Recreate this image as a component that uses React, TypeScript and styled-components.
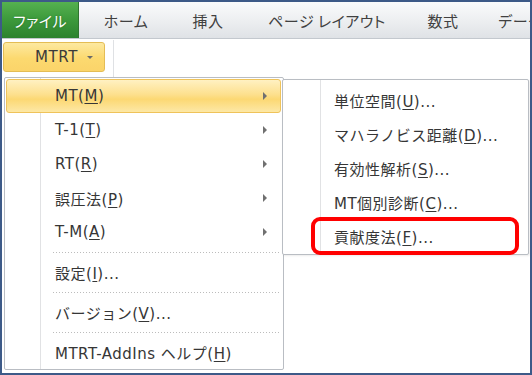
import React from "react";
import styled, { createGlobalStyle, css } from "styled-components";

const GlobalStyle = createGlobalStyle`
  html, body { margin: 0; padding: 0; background: #fff; }
  body {
    font-family: "DejaVu Sans", "Noto Sans CJK JP", sans-serif;
    -webkit-font-smoothing: antialiased;
  }
`;

const Frame = styled.div`
  width: 532px;
  height: 375px;
  box-sizing: border-box;
  border: 2px solid #3d5a88;
  background: #fff;
  overflow: hidden;
  display: flex;
  flex-direction: column;
`;

const TabBar = styled.div`
  flex: none;
  height: 37px;
  box-sizing: border-box;
  display: flex;
  align-items: stretch;
  background: linear-gradient(#fafbfc, #eceef0 55%, #dfe2e6);
  border-bottom: 1px solid #c3c8ce;
  font-family: "Noto Sans CJK JP", sans-serif;
  font-feature-settings: "palt";
  font-size: 15px;
  white-space: nowrap;
`;

const FileTab = styled.div`
  flex: none;
  width: 76px;
  display: flex;
  align-items: center;
  justify-content: center;
  color: #fff;
  letter-spacing: 0.5px;
  background: linear-gradient(#55b150, #3c993b 50%, #2c822e);
  border-right: 1px solid #2f7530;
  text-shadow: 0 0 2px rgba(0, 60, 0, 0.4);
`;

const Tab = styled.div<{ $w: number }>`
  flex: none;
  width: ${(p) => p.$w}px;
  display: flex;
  align-items: center;
  justify-content: center;
  color: #404040;
  letter-spacing: 0.5px;
`;

const Ribbon = styled.div`
  flex: none;
  height: 38px;
  box-sizing: border-box;
  display: flex;
  align-items: flex-start;
  padding: 3px 0 0 1px;
`;

const RibbonButton = styled.div`
  width: 102px;
  height: 30px;
  box-sizing: border-box;
  border: 1px solid #e4bd55;
  border-radius: 3px;
  background: linear-gradient(#fde9a1, #fcd96f 55%, #fbd46a);
  display: flex;
  align-items: center;
  padding-left: 31px;
  gap: 9px;
  font-size: 15px;
  letter-spacing: 0.6px;
  color: #3a3a3a;
`;

const SmallCaret = styled.span`
  width: 0;
  height: 0;
  border-left: 3px solid transparent;
  border-right: 3px solid transparent;
  border-top: 3px solid #6a6a6a;
  margin-top: 1px;
`;

const GroupDivider = styled.div`
  width: 1px;
  align-self: stretch;
  margin: -2px 0 0 8px;
  background: #dfe1e4;
`;

const MenuArea = styled.div`
  display: flex;
  align-items: flex-start;
  padding-left: 2px;
`;

const menuBase = css`
  flex: none;
  box-sizing: border-box;
  border: 1px solid #b9bdc3;
  border-radius: 2px;
  font-size: 15px;
  letter-spacing: 0.5px;
  color: #363636;
  white-space: nowrap;
`;

const MainMenu = styled.div`
  ${menuBase};
  width: 280px;
  padding: 1px 2px 0 1px;
  background: linear-gradient(
      to right,
      transparent 35px,
      #e1e2e4 35px,
      #e1e2e4 36px,
      #fff 36px,
      #fff 37px,
      transparent 37px
    ),
    #fff;
`;

const SubMenu = styled.div`
  ${menuBase};
  width: 247px;
  margin: 2px 0 0 -2px;
  padding: 3px 1px 1px 1px;
  background: linear-gradient(
      to right,
      transparent 37px,
      #e1e2e4 37px,
      #e1e2e4 38px,
      #fff 38px,
      #fff 39px,
      transparent 39px
    ),
    #fff;
  box-shadow: 1px 1px 2px rgba(0, 0, 0, 0.08);
`;

const Item = styled.div<{ $active?: boolean; $pad: number }>`
  position: relative;
  height: 34px;
  box-sizing: border-box;
  display: flex;
  align-items: center;
  padding-left: ${(p) => p.$pad}px;
  border: 1px solid transparent;
  border-radius: 3px;
  ${(p) =>
    p.$active &&
    css`
      border-color: #efc35a;
      background: linear-gradient(#fff1c2, #fde08e 45%, #fcd873 60%, #fde8a6);
    `}
`;

const Key = styled.span`
  text-decoration: underline;
  text-underline-offset: 2px;
  text-decoration-thickness: 1px;
`;

const Arrow = styled.span`
  margin-left: auto;
  margin-right: 13px;
  width: 0;
  height: 0;
  border-top: 4px solid transparent;
  border-bottom: 4px solid transparent;
  border-left: 4px solid #707070;
`;

const Separator = styled.div`
  height: 6px;
  display: flex;
  align-items: center;
  padding-left: 47px;
  &::after {
    content: "";
    flex: 1;
    height: 1px;
    background: repeating-linear-gradient(
      to right,
      #bcbcbc 0 1px,
      transparent 1px 3px
    );
  }
`;

const RedMark = styled.div`
  position: absolute;
  left: 26px;
  right: 7px;
  top: -3px;
  bottom: -3px;
  border: 4px solid #ff0000;
  border-radius: 9px;
  pointer-events: none;
`;

type Entry = { label: string; key: string; tail?: string; sub?: boolean };

const mainTop: Entry[] = [
  { label: "MT", key: "M", sub: true },
  { label: "T-1", key: "T", sub: true },
  { label: "RT", key: "R", sub: true },
  { label: "誤圧法", key: "P", sub: true },
  { label: "T-M", key: "A", sub: true },
];

const mainBottom: Entry[] = [
  { label: "設定", key: "I", tail: "..." },
  { label: "バージョン", key: "V", tail: "..." },
  { label: "MTRT-AddIns ヘルプ", key: "H" },
];

const subItems: Entry[] = [
  { label: "単位空間", key: "U", tail: "..." },
  { label: "マハラノビス距離", key: "D", tail: "..." },
  { label: "有効性解析", key: "S", tail: "..." },
  { label: "MT個別診断", key: "C", tail: "..." },
  { label: "貢献度法", key: "F", tail: "..." },
];

const Label = ({ e }: { e: Entry }) => (
  <span>
    {e.label}(<Key>{e.key}</Key>){e.tail ?? ""}
  </span>
);

export default function App() {
  return (
    <>
      <GlobalStyle />
      <Frame>
        <TabBar>
          <FileTab>ファイル</FileTab>
          <Tab $w={94}>ホーム</Tab>
          <Tab $w={70}>挿入</Tab>
          <Tab $w={168}>ページ レイアウト</Tab>
          <Tab $w={64}>数式</Tab>
          <Tab $w={90}>データ</Tab>
        </TabBar>
        <Ribbon>
          <RibbonButton>
            MTRT
            <SmallCaret />
          </RibbonButton>
          <GroupDivider />
        </Ribbon>
        <MenuArea>
          <MainMenu>
            {mainTop.map((e, i) => (
              <Item key={e.label} $active={i === 0} $pad={48}>
                <Label e={e} />
                {e.sub && <Arrow />}
              </Item>
            ))}
            {mainBottom.map((e) => (
              <React.Fragment key={e.label}>
                <Separator />
                <Item $pad={48}>
                  <Label e={e} />
                </Item>
              </React.Fragment>
            ))}
          </MainMenu>
          <SubMenu>
            {subItems.map((e, i) => (
              <Item key={e.label} $pad={49}>
                <Label e={e} />
                {i === subItems.length - 1 && <RedMark />}
              </Item>
            ))}
          </SubMenu>
        </MenuArea>
      </Frame>
    </>
  );
}
